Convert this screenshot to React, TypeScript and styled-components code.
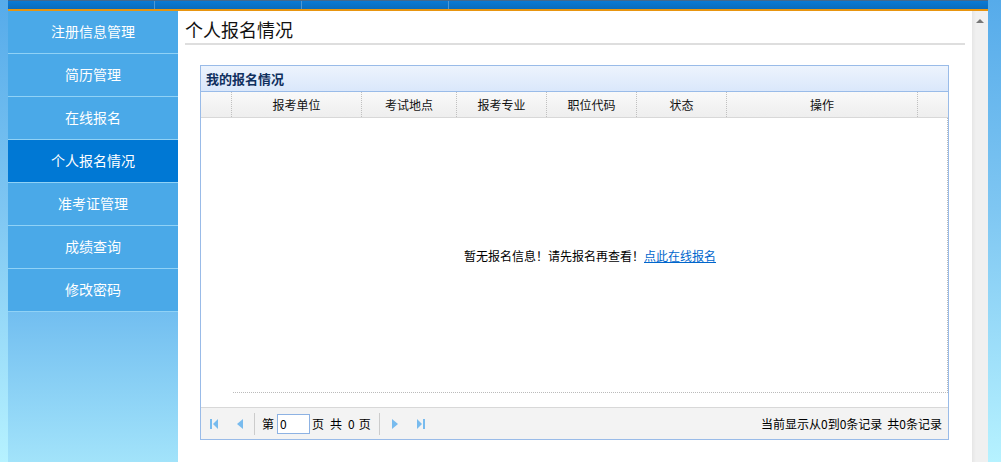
import React from "react";
import styled, { createGlobalStyle } from "styled-components";

const GlobalStyle = createGlobalStyle`
  html, body {
    margin: 0;
    padding: 0;
    overflow: hidden;
  }
  body {
    font-family: "Noto Sans CJK SC", "Noto Sans", sans-serif;
    font-size: 12px;
    color: #000;
  }
  * {
    box-sizing: border-box;
  }
`;

const Page = styled.div`
  display: flex;
  height: 462px;
  padding: 0 13px 0 8px;
  background: linear-gradient(to bottom, #56abea 0%, #7ec6f2 45%, #b6f2ff 100%);
`;

const Frame = styled.div`
  flex: 1;
  display: flex;
  flex-direction: column;
  min-width: 0;
`;

const TopBar = styled.div`
  display: flex;
  height: 11px;
  border-top: 1px solid #44698f;
  border-bottom: 2px solid #e8950f;
  background: linear-gradient(to bottom, #0a7ad6, #0b6cbc);
`;

const TopTab = styled.div`
  width: 147px;
  border-right: 1px solid #4c97d6;
`;

const Body = styled.div`
  flex: 1;
  display: flex;
  min-height: 0;
`;

const Sidebar = styled.ul`
  width: 170px;
  margin: 0;
  padding: 0;
  list-style: none;
  background: linear-gradient(to bottom, #4aa9e8 0px, #4aa9e8 300px, #72bef0 301px, #a2e3fa 100%);
`;

const MenuItem = styled.li<{ $active?: boolean }>`
  height: 43px;
  display: flex;
  align-items: center;
  justify-content: center;
  border-bottom: 1px solid #90d2f6;
  background: ${({ $active }) => ($active ? "#0078d4" : "#4aa9e8")};
  color: #fff;
  font-family: "Noto Sans CJK SC", sans-serif;
  font-size: 14px;
  padding-bottom: 2px;
`;

const Main = styled.div`
  flex: 1;
  display: flex;
  background: #fff;
  min-width: 0;
`;

const Content = styled.div`
  flex: 1;
  padding: 0 7px 0 7px;
  min-width: 0;
`;

const Title = styled.h2`
  margin: 0;
  height: 34px;
  padding-top: 6px;
  font-family: "Noto Sans CJK SC", sans-serif;
  font-size: 18px;
  font-weight: normal;
  line-height: 24px;
  color: #111;
  border-bottom: 2px solid #dedede;
`;

const Panel = styled.section`
  margin: 20px 16px 0 15px;
  border: 1px solid #99bbe8;
  display: flex;
  flex-direction: column;
`;

const PanelHeader = styled.div`
  height: 26px;
  padding-left: 5px;
  display: flex;
  align-items: center;
  font-size: 13px;
  font-weight: bold;
  color: #10305e;
  background: linear-gradient(to bottom, #edf4fd, #dae7fb);
  border-bottom: 1px solid #99bbe8;
`;

const HeadRow = styled.div`
  display: grid;
  grid-template-columns: 31px 130px 95px 90px 90px 90px 191px 1fr;
  height: 26px;
  background: linear-gradient(to bottom, #f9f9f9, #eeeeee);
  border-bottom: 1px solid #d8d8d8;
`;

const HeadCell = styled.div`
  display: flex;
  align-items: center;
  justify-content: center;
  border-right: 1px dotted #c0c0c0;
  font-size: 12px;
  color: #111;
  &:last-child {
    border-right: none;
  }
`;

const GridBody = styled.div`
  height: 290px;
  display: flex;
  border-bottom: 1px solid #d8d8d8;
`;

const RowNumbers = styled.div`
  width: 32px;
`;

const EmptyArea = styled.div`
  flex: 1;
  height: 275px;
  display: flex;
  align-items: center;
  justify-content: center;
  border-right: 1px dotted #bbbbbb;
  border-bottom: 1px dotted #bbbbbb;
  font-size: 12px;
`;

const EmptyLink = styled.a`
  color: #0066cc;
  text-decoration: underline;
  cursor: pointer;
`;

const Pager = styled.div`
  height: 31px;
  display: flex;
  align-items: center;
  padding-right: 6px;
  background: #f3f3f3;
  font-size: 12px;
`;

const PagerButton = styled.button<{ $gap: number }>`
  width: 8px;
  height: 12px;
  margin-left: ${({ $gap }) => $gap}px;
  padding: 0;
  border: none;
  background: transparent;
  display: flex;
`;

const PagerSep = styled.span<{ $gap: number }>`
  width: 1px;
  height: 22px;
  margin-left: ${({ $gap }) => $gap}px;
  background: #cccccc;
`;

const PagerText = styled.span<{ $gap: number }>`
  margin-left: ${({ $gap }) => $gap}px;
`;

const PageInput = styled.input`
  width: 33px;
  height: 20px;
  margin-left: 3px;
  border: 1px solid #8db2e3;
  font-family: "Noto Sans CJK SC", sans-serif;
  font-size: 12px;
  padding: 0 2px;
  outline: none;
`;

const PagerInfo = styled.span`
  margin-left: auto;
  display: flex;
  gap: 5px;
`;

const ScrollTrack = styled.div`
  width: 16px;
  background: linear-gradient(to right, #e6e6e6, #f0f0f0 4px, #f0f0f0);
  display: flex;
  justify-content: center;
  padding-top: 8px;
`;

const ScrollArrow = styled.span`
  width: 0;
  height: 0;
  border-left: 4px solid transparent;
  border-right: 4px solid transparent;
  border-bottom: 4px solid #777;
`;

const iconShapes: Record<string, { bar?: number; tri: string }> = {
  first: { bar: 0, tri: "8,1 8,11 3,6" },
  prev: { tri: "7,1 7,11 1,6" },
  next: { tri: "1,1 1,11 7,6" },
  last: { bar: 6, tri: "0,1 0,11 5,6" },
};

const PagerIcon: React.FC<{ dir: keyof typeof iconShapes }> = ({ dir }) => {
  const color = "#78bbee";
  const shape = iconShapes[dir];
  return (
    <svg width="8" height="12" viewBox="0 0 8 12">
      {shape.bar !== undefined && <rect x={shape.bar} y="1" width="2" height="10" fill={color} />}
      <polygon points={shape.tri} fill={color} />
    </svg>
  );
};

const menus = ["注册信息管理", "简历管理", "在线报名", "个人报名情况", "准考证管理", "成绩查询", "修改密码"];
const columns = ["", "报考单位", "考试地点", "报考专业", "职位代码", "状态", "操作", ""];

export default function App() {
  return (
    <>
      <GlobalStyle />
      <Page>
        <Frame>
          <TopBar>
            <TopTab />
            <TopTab />
            <TopTab />
          </TopBar>
          <Body>
            <Sidebar>
              {menus.map((m) => (
                <MenuItem key={m} $active={m === "个人报名情况"}>
                  {m}
                </MenuItem>
              ))}
            </Sidebar>
            <Main>
              <Content>
                <Title>个人报名情况</Title>
                <Panel>
                  <PanelHeader>我的报名情况</PanelHeader>
                  <HeadRow>
                    {columns.map((c, i) => (
                      <HeadCell key={i}>{c}</HeadCell>
                    ))}
                  </HeadRow>
                  <GridBody>
                    <RowNumbers />
                    <EmptyArea>
                      <span>
                        暂无报名信息！请先报名再查看！<EmptyLink>点此在线报名</EmptyLink>
                      </span>
                    </EmptyArea>
                  </GridBody>
                  <Pager>
                    <PagerButton $gap={9}>
                      <PagerIcon dir="first" />
                    </PagerButton>
                    <PagerButton $gap={18}>
                      <PagerIcon dir="prev" />
                    </PagerButton>
                    <PagerSep $gap={10} />
                    <PagerText $gap={7}>第</PagerText>
                    <PageInput defaultValue="0" />
                    <PagerText $gap={2}>页</PagerText>
                    <PagerText $gap={6}>共</PagerText>
                    <PagerText $gap={6}>0</PagerText>
                    <PagerText $gap={4}>页</PagerText>
                    <PagerSep $gap={8} />
                    <PagerButton $gap={11}>
                      <PagerIcon dir="next" />
                    </PagerButton>
                    <PagerButton $gap={18}>
                      <PagerIcon dir="last" />
                    </PagerButton>
                    <PagerInfo>
                      <span>当前显示从0到0条记录</span>
                      <span>共0条记录</span>
                    </PagerInfo>
                  </Pager>
                </Panel>
              </Content>
              <ScrollTrack>
                <ScrollArrow />
              </ScrollTrack>
            </Main>
          </Body>
        </Frame>
      </Page>
    </>
  );
}
